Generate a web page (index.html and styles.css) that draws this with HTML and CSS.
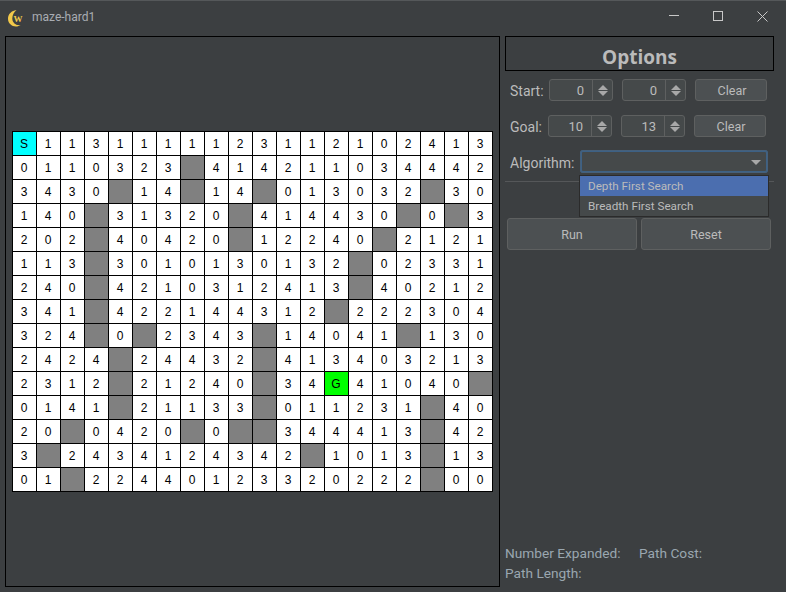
FILE: index.html
```html
<!DOCTYPE html>
<html lang="en">
<head>
<meta charset="utf-8">
<title>maze-hard1</title>
<link rel="stylesheet" href="styles.css">
</head>
<body>
<div class="window">
  <header class="titlebar">
    <svg class="logo" width="16" height="17" viewBox="0 0 16 17"><path d="M8.500 0C3.500 .8 0 4 0 8.800c0 4.700 3.800 7.700 7.800 7.700 2 0 3.600-.6 4.700-1.500-1 .2-2 .2-3 0C6.300 14.300 4.300 11.500 4.300 8.500 4.300 5 6 2 8.500 0z" fill="#f2c94a"/><text x="5.600" y="12" class="logo-w">W</text></svg>
    <span class="title">maze-hard1</span>
    <div class="winctl">
      <svg width="11" height="11" viewBox="0 0 11 11"><path d="M0 4.500h10" stroke="#c8c8c8" fill="none"/></svg>
      <svg width="11" height="11" viewBox="0 0 11 11"><rect x=".5" y=".5" width="9" height="9" stroke="#c8c8c8" fill="none"/></svg>
      <svg width="11" height="11" viewBox="0 0 11 11"><path d="M.5 .5l10 10M10.500 .5l-10 10" stroke="#c8c8c8" fill="none"/></svg>
    </div>
  </header>
  <main class="content">
    <section class="maze-panel">
      <div class="maze" id="maze">
        <div class="c s">S</div><div class="c">1</div><div class="c">1</div><div class="c">3</div><div class="c">1</div><div class="c">1</div><div class="c">1</div><div class="c">1</div><div class="c">1</div><div class="c">2</div><div class="c">3</div><div class="c">1</div><div class="c">1</div><div class="c">2</div><div class="c">1</div><div class="c">0</div><div class="c">2</div><div class="c">4</div><div class="c">1</div><div class="c">3</div>
        <div class="c">0</div><div class="c">1</div><div class="c">1</div><div class="c">0</div><div class="c">3</div><div class="c">2</div><div class="c">3</div><div class="c w"></div><div class="c">4</div><div class="c">1</div><div class="c">4</div><div class="c">2</div><div class="c">1</div><div class="c">1</div><div class="c">0</div><div class="c">3</div><div class="c">4</div><div class="c">4</div><div class="c">4</div><div class="c">2</div>
        <div class="c">3</div><div class="c">4</div><div class="c">3</div><div class="c">0</div><div class="c w"></div><div class="c">1</div><div class="c">4</div><div class="c w"></div><div class="c">1</div><div class="c">4</div><div class="c w"></div><div class="c">0</div><div class="c">1</div><div class="c">3</div><div class="c">0</div><div class="c">3</div><div class="c">2</div><div class="c w"></div><div class="c">3</div><div class="c">0</div>
        <div class="c">1</div><div class="c">4</div><div class="c">0</div><div class="c w"></div><div class="c">3</div><div class="c">1</div><div class="c">3</div><div class="c">2</div><div class="c">0</div><div class="c w"></div><div class="c">4</div><div class="c">1</div><div class="c">4</div><div class="c">4</div><div class="c">3</div><div class="c">0</div><div class="c w"></div><div class="c">0</div><div class="c w"></div><div class="c">3</div>
        <div class="c">2</div><div class="c">0</div><div class="c">2</div><div class="c w"></div><div class="c">4</div><div class="c">0</div><div class="c">4</div><div class="c">2</div><div class="c">0</div><div class="c w"></div><div class="c">1</div><div class="c">2</div><div class="c">2</div><div class="c">4</div><div class="c">0</div><div class="c w"></div><div class="c">2</div><div class="c">1</div><div class="c">2</div><div class="c">1</div>
        <div class="c">1</div><div class="c">1</div><div class="c">3</div><div class="c w"></div><div class="c">3</div><div class="c">0</div><div class="c">1</div><div class="c">0</div><div class="c">1</div><div class="c">3</div><div class="c">0</div><div class="c">1</div><div class="c">3</div><div class="c">2</div><div class="c w"></div><div class="c">0</div><div class="c">2</div><div class="c">3</div><div class="c">3</div><div class="c">1</div>
        <div class="c">2</div><div class="c">4</div><div class="c">0</div><div class="c w"></div><div class="c">4</div><div class="c">2</div><div class="c">1</div><div class="c">0</div><div class="c">3</div><div class="c">1</div><div class="c">2</div><div class="c">4</div><div class="c">1</div><div class="c">3</div><div class="c w"></div><div class="c">4</div><div class="c">0</div><div class="c">2</div><div class="c">1</div><div class="c">2</div>
        <div class="c">3</div><div class="c">4</div><div class="c">1</div><div class="c w"></div><div class="c">4</div><div class="c">2</div><div class="c">2</div><div class="c">1</div><div class="c">4</div><div class="c">4</div><div class="c">3</div><div class="c">1</div><div class="c">2</div><div class="c w"></div><div class="c">2</div><div class="c">2</div><div class="c">2</div><div class="c">3</div><div class="c">0</div><div class="c">4</div>
        <div class="c">3</div><div class="c">2</div><div class="c">4</div><div class="c w"></div><div class="c">0</div><div class="c w"></div><div class="c">2</div><div class="c">3</div><div class="c">4</div><div class="c">3</div><div class="c w"></div><div class="c">1</div><div class="c">4</div><div class="c">0</div><div class="c">4</div><div class="c">1</div><div class="c w"></div><div class="c">1</div><div class="c">3</div><div class="c">0</div>
        <div class="c">2</div><div class="c">4</div><div class="c">2</div><div class="c">4</div><div class="c w"></div><div class="c">2</div><div class="c">4</div><div class="c">4</div><div class="c">3</div><div class="c">2</div><div class="c w"></div><div class="c">4</div><div class="c">1</div><div class="c">3</div><div class="c">4</div><div class="c">0</div><div class="c">3</div><div class="c">2</div><div class="c">1</div><div class="c">3</div>
        <div class="c">2</div><div class="c">3</div><div class="c">1</div><div class="c">2</div><div class="c w"></div><div class="c">2</div><div class="c">1</div><div class="c">2</div><div class="c">4</div><div class="c">0</div><div class="c w"></div><div class="c">3</div><div class="c">4</div><div class="c g">G</div><div class="c">4</div><div class="c">1</div><div class="c">0</div><div class="c">4</div><div class="c">0</div><div class="c w"></div>
        <div class="c">0</div><div class="c">1</div><div class="c">4</div><div class="c">1</div><div class="c w"></div><div class="c">2</div><div class="c">1</div><div class="c">1</div><div class="c">3</div><div class="c">3</div><div class="c w"></div><div class="c">0</div><div class="c">1</div><div class="c">1</div><div class="c">2</div><div class="c">3</div><div class="c">1</div><div class="c w"></div><div class="c">4</div><div class="c">0</div>
        <div class="c">2</div><div class="c">0</div><div class="c w"></div><div class="c">0</div><div class="c">4</div><div class="c">2</div><div class="c">0</div><div class="c w"></div><div class="c">0</div><div class="c w"></div><div class="c w"></div><div class="c">3</div><div class="c">4</div><div class="c">4</div><div class="c">4</div><div class="c">1</div><div class="c">3</div><div class="c w"></div><div class="c">4</div><div class="c">2</div>
        <div class="c">3</div><div class="c w"></div><div class="c">2</div><div class="c">4</div><div class="c">3</div><div class="c">4</div><div class="c">1</div><div class="c">2</div><div class="c">4</div><div class="c">3</div><div class="c">4</div><div class="c">2</div><div class="c w"></div><div class="c">1</div><div class="c">0</div><div class="c">1</div><div class="c">3</div><div class="c w"></div><div class="c">1</div><div class="c">3</div>
        <div class="c">0</div><div class="c">1</div><div class="c w"></div><div class="c">2</div><div class="c">2</div><div class="c">4</div><div class="c">4</div><div class="c">0</div><div class="c">1</div><div class="c">2</div><div class="c">3</div><div class="c">3</div><div class="c">2</div><div class="c">0</div><div class="c">2</div><div class="c">2</div><div class="c">2</div><div class="c w"></div><div class="c">0</div><div class="c">0</div>
      </div>
    </section>
    <aside class="options">
      <h1 class="options-title">Options</h1>
      <div class="row row-start">
        <span class="lbl">Start:</span>
        <div class="spin"><span class="val">0</span><span class="arrows"><i class="up"></i><i class="down"></i></span></div>
        <div class="spin"><span class="val">0</span><span class="arrows"><i class="up"></i><i class="down"></i></span></div>
        <button class="btn clear">Clear</button>
      </div>
      <div class="row row-goal">
        <span class="lbl">Goal:</span>
        <div class="spin"><span class="val">10</span><span class="arrows"><i class="up"></i><i class="down"></i></span></div>
        <div class="spin"><span class="val">13</span><span class="arrows"><i class="up"></i><i class="down"></i></span></div>
        <button class="btn clear">Clear</button>
      </div>
      <div class="row row-algo">
        <span class="lbl">Algorithm:</span>
        <div class="combo"><i class="caret"></i>
          <ul class="popup">
            <li class="sel">Depth First Search</li>
            <li>Breadth First Search</li>
          </ul>
        </div>
      </div>
      <hr class="sep">
      <div class="actions">
        <button class="btn big">Run</button>
        <button class="btn big">Reset</button>
      </div>
      <div class="stats">
        <div class="stat-line"><span class="stat-a">Number Expanded:</span><span>Path Cost:</span></div>
        <div class="stat-line"><span>Path Length:</span></div>
      </div>
    </aside>
  </main>
</div>
</body>
</html>
```
FILE: styles.css
```css
* { box-sizing: border-box; }
html, body { margin: 0; padding: 0; }
body {
  width: 786px; height: 592px; overflow: hidden;
  background: #3c3f41; color: #bbbbbb;
  font-family: Roboto, "Open Sans", sans-serif; font-size: 13px;
}
.window { height: 592px; display: flex; flex-direction: column; border-top: 1px solid #55585a; }
.titlebar { height: 35px; flex: none; display: flex; align-items: center; padding-left: 8px; }
.logo { flex: none; margin-top: -1px; }
.logo-w { font: bold 9px "Liberation Serif", serif; fill: #f2c94a; }
.title { margin-left: 8px; font-size: 12px; color: #a9adb3; margin-top: -3px; }
.winctl { margin-left: auto; display: flex; gap: 33px; padding-right: 18px; margin-top: -4px; }
.winctl svg { display: block; }
.content { flex: 1; display: flex; padding: 0 0 5px 5px; gap: 5px; min-height: 0; }
.maze-panel {
  width: 495px; border: 1px solid #000;
  display: flex; align-items: center; justify-content: center;
}
.maze {
  display: grid; grid-template-columns: repeat(20, 24px); grid-auto-rows: 24px;
  width: 481px; border-right: 1px solid #000; border-bottom: 1px solid #000;
}
.c {
  border-left: 1px solid #000; border-top: 1px solid #000;
  background: #fff; color: #000;
  display: flex; align-items: center; justify-content: center;
  font-family: "Liberation Sans", sans-serif; font-size: 12px; padding-right: 1px;
}
.c.w { background: #808080; }
.c.s { background: #00ffff; }
.c.g { background: #00ff00; }
.options { width: 269px; display: flex; flex-direction: column; position: relative; }
.options-title {
  margin: 0; height: 35px; border: 1px solid #000;
  display: flex; align-items: center; justify-content: center;
  font-family: "Open Sans", sans-serif;
  font-size: 19px; font-weight: 700; color: #bbbbbb; padding-top: 6px;
}
.row { display: flex; align-items: center; }
.row-start { margin-top: 8px; padding-left: 5px; height: 22px; }
.row-goal { margin-top: 14px; padding-left: 5px; height: 22px; }
.row-algo { margin-top: 13px; padding-left: 5px; height: 23px; }
.lbl { font-size: 14px; color: #bbbbbb; padding-top: 2px; }
.row-start .lbl { width: 39px; }
.row-goal .lbl { width: 38px; }
.row-algo .lbl { width: 70px; }
.spin {
  width: 64px; height: 22px; margin-right: 9px;
  border: 1px solid #5e6060; border-radius: 3px; background: #45494a;
  display: flex; align-items: stretch; font-size: 13px;
}
.val { flex: 1; text-align: right; padding-right: 8px; line-height: 21px; }
.arrows {
  width: 20px; border-left: 1px solid #5e6060;
  display: flex; flex-direction: column; align-items: center; justify-content: center; gap: 1px;
}
.up, .down { display: block; width: 0; height: 0; border-left: 5px solid transparent; border-right: 5px solid transparent; }
.up { border-bottom: 5px solid #a8a8a8; }
.down { border-top: 5px solid #a8a8a8; }
.btn {
  font-family: inherit; font-size: 12.5px; color: #bbbbbb; padding: 0;
  background: #4c5052; border: 1px solid #5e6060; border-radius: 3px;
}
.clear { width: 72px; height: 22px; padding-left: 2px; padding-top: 1px; }
.combo {
  position: relative; width: 188px; height: 23px;
  background: #45494a; border: 2px solid #3d6185; border-radius: 3px; outline: 1px solid #46607a; outline-offset: -1px;
}
.caret {
  position: absolute; right: 5px; top: 8px; width: 0; height: 0;
  border-left: 5px solid transparent; border-right: 5px solid transparent; border-top: 5px solid #a8a8a8;
}
.popup {
  position: absolute; left: -3px; top: 23px; width: 190px; margin: 0; padding: 0;
  list-style: none; background: #45494a; border: 1px solid #2b2b2b; z-index: 2; font-size: 11.7px;
}
.popup li { height: 20px; line-height: 21px; padding-left: 8px; white-space: nowrap; }
.popup .sel { background: #4b6eaf; }
.sep { margin: 8px 0 0; border: 0; border-top: 1px solid #555759; height: 1px; }
.actions { display: flex; gap: 4px; padding-left: 2px; margin-top: 36px; }
.big { width: 130px; height: 32px; }
.stats { margin-top: auto; font-size: 13.7px; color: #9aa7b0; padding-bottom: 4px; }
.stat-line { height: 20px; line-height: 20px; white-space: nowrap; }
.stat-a { display: inline-block; width: 134px; }
```
